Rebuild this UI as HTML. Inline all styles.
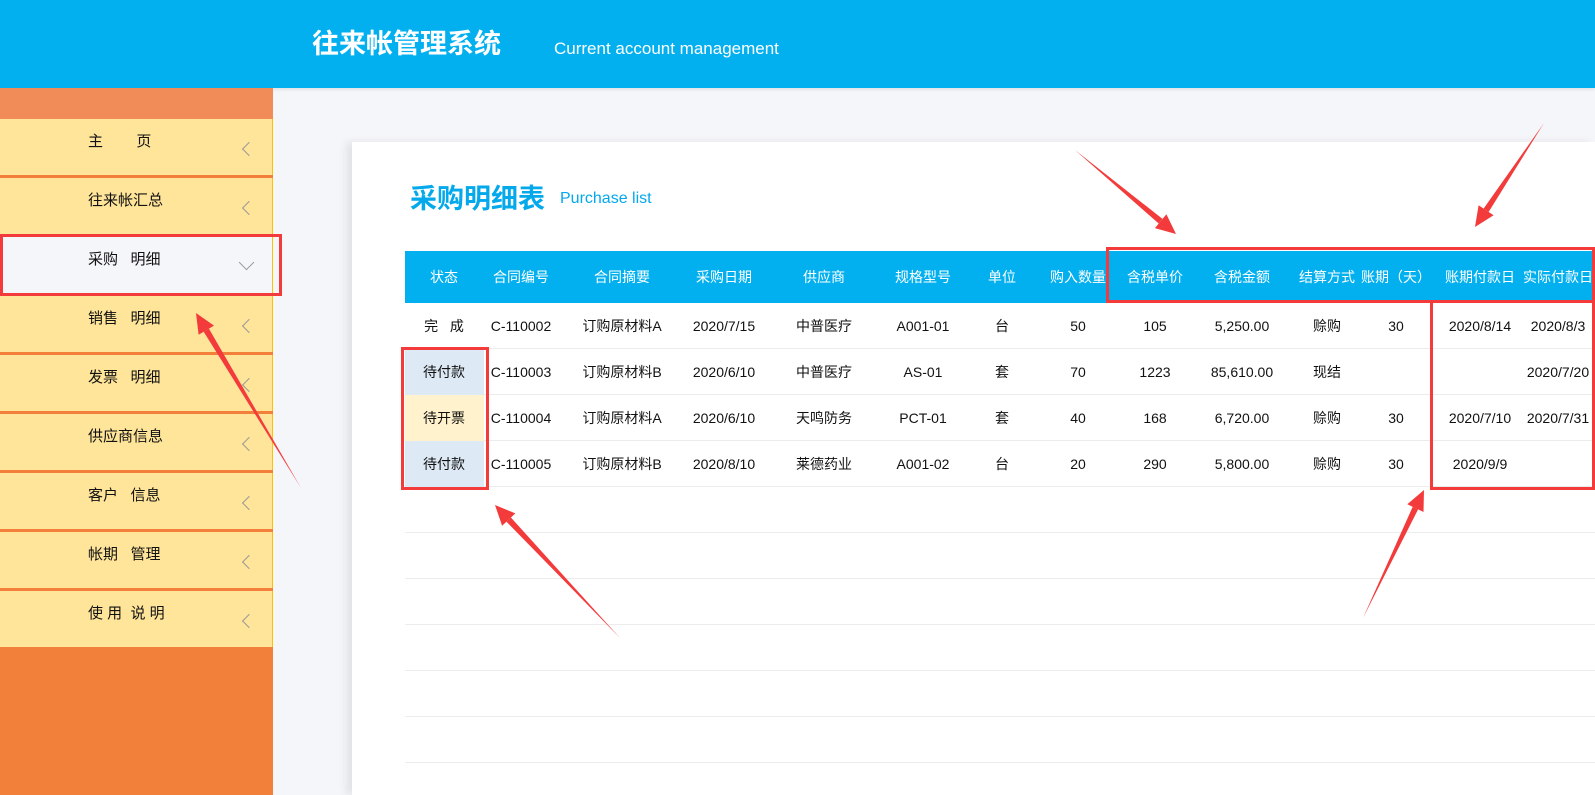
<!DOCTYPE html>
<html><head><meta charset="utf-8"><style>
*{margin:0;padding:0;box-sizing:border-box}
body{width:1595px;height:795px;overflow:hidden;background:#f5f6fa;font-family:"Liberation Sans","Noto Sans CJK SC",sans-serif;position:relative}
.hd{position:absolute;left:0;top:0;width:1595px;height:88px;background:#03b0ef;box-shadow:0 2px 3px rgba(0,0,0,.08)}
.hd .t{position:absolute;left:312px;top:24px;color:#fff;font-size:27px;font-weight:bold;line-height:40px}
.hd .s{position:absolute;left:554px;top:37px;color:#fff;font-size:17px;line-height:24px}
.sb{position:absolute;left:0;top:88px;width:273px;height:707px;background:#f3803a}
.sb .top{position:absolute;left:0;top:0;width:273px;height:31px;background:#f18c58}
.it{position:absolute;left:0;width:273px;height:56px;background:#ffe599;border-right:1px solid #ffc000;font-size:15px;color:#111}
.it span{position:absolute;left:88px;top:12px;white-space:pre;line-height:22px}
.it i{position:absolute;left:244px;top:25px;width:10px;height:10px;border-left:1px solid #999;border-bottom:1px solid #999;transform:rotate(45deg)}
.it.hl{background:#f5f6fa}
.it.hl i{transform:rotate(-45deg);top:20px;left:241px;width:11px;height:11px}
.card{position:absolute;left:352px;top:142px;width:1243px;height:653px;background:#fff;box-shadow:-6px 0 8px rgba(0,0,0,.08)}
.ti{position:absolute;left:410px;top:181px;color:#03a9ea;font-size:27px;font-weight:bold;line-height:36px}
.ts{position:absolute;left:560px;top:188px;color:#03a9ea;font-size:16px;line-height:22px}
.th{position:absolute;left:405px;top:251px;width:1190px;height:52px;background:#03b0ef}
.c{position:absolute;transform:translateX(-50%);white-space:pre;font-size:14px;color:#111;top:0}
.th .c{color:#fff;line-height:52px}
.row{position:absolute;left:405px;width:1190px;height:46px;border-bottom:1px solid #ececec}
.row .c{line-height:46px}
.st{position:absolute;left:0;top:0;width:79px;height:46px}
.rb{position:absolute;border:3px solid #f33b3b}
</style></head><body>
<div class="hd"><div class="t">往来帐管理系统</div><div class="s">Current account management</div></div>
<div class="sb"><div class="top"></div></div>
<div class="it" style="top:119px"><span>主        页</span><i></i></div>
<div class="it" style="top:178px"><span>往来帐汇总</span><i></i></div>
<div class="it hl" style="top:237px"><span>采购   明细</span><i></i></div>
<div class="it" style="top:296px"><span>销售   明细</span><i></i></div>
<div class="it" style="top:355px"><span>发票   明细</span><i></i></div>
<div class="it" style="top:414px"><span>供应商信息</span><i></i></div>
<div class="it" style="top:473px"><span>客户   信息</span><i></i></div>
<div class="it" style="top:532px"><span>帐期   管理</span><i></i></div>
<div class="it" style="top:591px"><span>使 用  说 明</span><i></i></div>
<div class="card"></div>
<div class="ti">采购明细表</div><div class="ts">Purchase list</div>
<div class="th">
<span class="c" style="left:39px">状态</span><span class="c" style="left:116px">合同编号</span><span class="c" style="left:217px">合同摘要</span><span class="c" style="left:319px">采购日期</span><span class="c" style="left:419px">供应商</span><span class="c" style="left:518px">规格型号</span><span class="c" style="left:597px">单位</span><span class="c" style="left:673px">购入数量</span><span class="c" style="left:750px">含税单价</span><span class="c" style="left:837px">含税金额</span><span class="c" style="left:922px">结算方式</span><span class="c" style="left:991px">账期（天）</span><span class="c" style="left:1075px">账期付款日</span><span class="c" style="left:1153px">实际付款日</span>
</div>
<div class="row" style="top:303px"><span class="c" style="left:39px">完   成</span><span class="c" style="left:116px">C-110002</span><span class="c" style="left:217px">订购原材料A</span><span class="c" style="left:319px">2020/7/15</span><span class="c" style="left:419px">中普医疗</span><span class="c" style="left:518px">A001-01</span><span class="c" style="left:597px">台</span><span class="c" style="left:673px">50</span><span class="c" style="left:750px">105</span><span class="c" style="left:837px">5,250.00</span><span class="c" style="left:922px">赊购</span><span class="c" style="left:991px">30</span><span class="c" style="left:1075px">2020/8/14</span><span class="c" style="left:1153px">2020/8/3</span></div>
<div class="row" style="top:349px"><div class="st" style="background:#dde9f5"></div><span class="c" style="left:39px">待付款</span><span class="c" style="left:116px">C-110003</span><span class="c" style="left:217px">订购原材料B</span><span class="c" style="left:319px">2020/6/10</span><span class="c" style="left:419px">中普医疗</span><span class="c" style="left:518px">AS-01</span><span class="c" style="left:597px">套</span><span class="c" style="left:673px">70</span><span class="c" style="left:750px">1223</span><span class="c" style="left:837px">85,610.00</span><span class="c" style="left:922px">现结</span><span class="c" style="left:1153px">2020/7/20</span></div>
<div class="row" style="top:395px"><div class="st" style="background:#fff2cc"></div><span class="c" style="left:39px">待开票</span><span class="c" style="left:116px">C-110004</span><span class="c" style="left:217px">订购原材料A</span><span class="c" style="left:319px">2020/6/10</span><span class="c" style="left:419px">天鸣防务</span><span class="c" style="left:518px">PCT-01</span><span class="c" style="left:597px">套</span><span class="c" style="left:673px">40</span><span class="c" style="left:750px">168</span><span class="c" style="left:837px">6,720.00</span><span class="c" style="left:922px">赊购</span><span class="c" style="left:991px">30</span><span class="c" style="left:1075px">2020/7/10</span><span class="c" style="left:1153px">2020/7/31</span></div>
<div class="row" style="top:441px"><div class="st" style="background:#dde9f5"></div><span class="c" style="left:39px">待付款</span><span class="c" style="left:116px">C-110005</span><span class="c" style="left:217px">订购原材料B</span><span class="c" style="left:319px">2020/8/10</span><span class="c" style="left:419px">莱德药业</span><span class="c" style="left:518px">A001-02</span><span class="c" style="left:597px">台</span><span class="c" style="left:673px">20</span><span class="c" style="left:750px">290</span><span class="c" style="left:837px">5,800.00</span><span class="c" style="left:922px">赊购</span><span class="c" style="left:991px">30</span><span class="c" style="left:1075px">2020/9/9</span></div>
<div class="row" style="top:487px"></div><div class="row" style="top:533px"></div><div class="row" style="top:579px"></div><div class="row" style="top:625px"></div><div class="row" style="top:671px"></div><div class="row" style="top:717px"></div>
<div class="rb" style="left:0;top:234px;width:282px;height:62px"></div>
<div class="rb" style="left:401px;top:347px;width:88px;height:143px"></div>
<div class="rb" style="left:1106px;top:247px;width:489px;height:56px"></div>
<div class="rb" style="left:1430px;top:303px;width:165px;height:187px;border-top:none"></div>
<svg width="1595" height="795" style="position:absolute;left:0;top:0" fill="#f33b3b">
<polygon points="301,488 208.9,328.6 203.7,331.7"/><polygon points="196,313 214,325.6 198.6,334.8"/>
<polygon points="620,638 510.9,517.5 506.5,521.7"/><polygon points="495,505 515.3,513.4 502.1,525.8"/>
<polygon points="1075,150 1158.7,223.5 1162.5,218.9"/><polygon points="1176,234 1154.9,228.1 1166.4,214.3"/>
<polygon points="1544,123 1483.6,208.6 1488.6,212"/><polygon points="1475,227 1478.6,205.3 1493.6,215.3"/>
<polygon points="1363,618 1418.1,509.4 1412.7,506.8"/><polygon points="1424,490 1423.5,512 1407.3,504.2"/>
</svg>
</body></html>
